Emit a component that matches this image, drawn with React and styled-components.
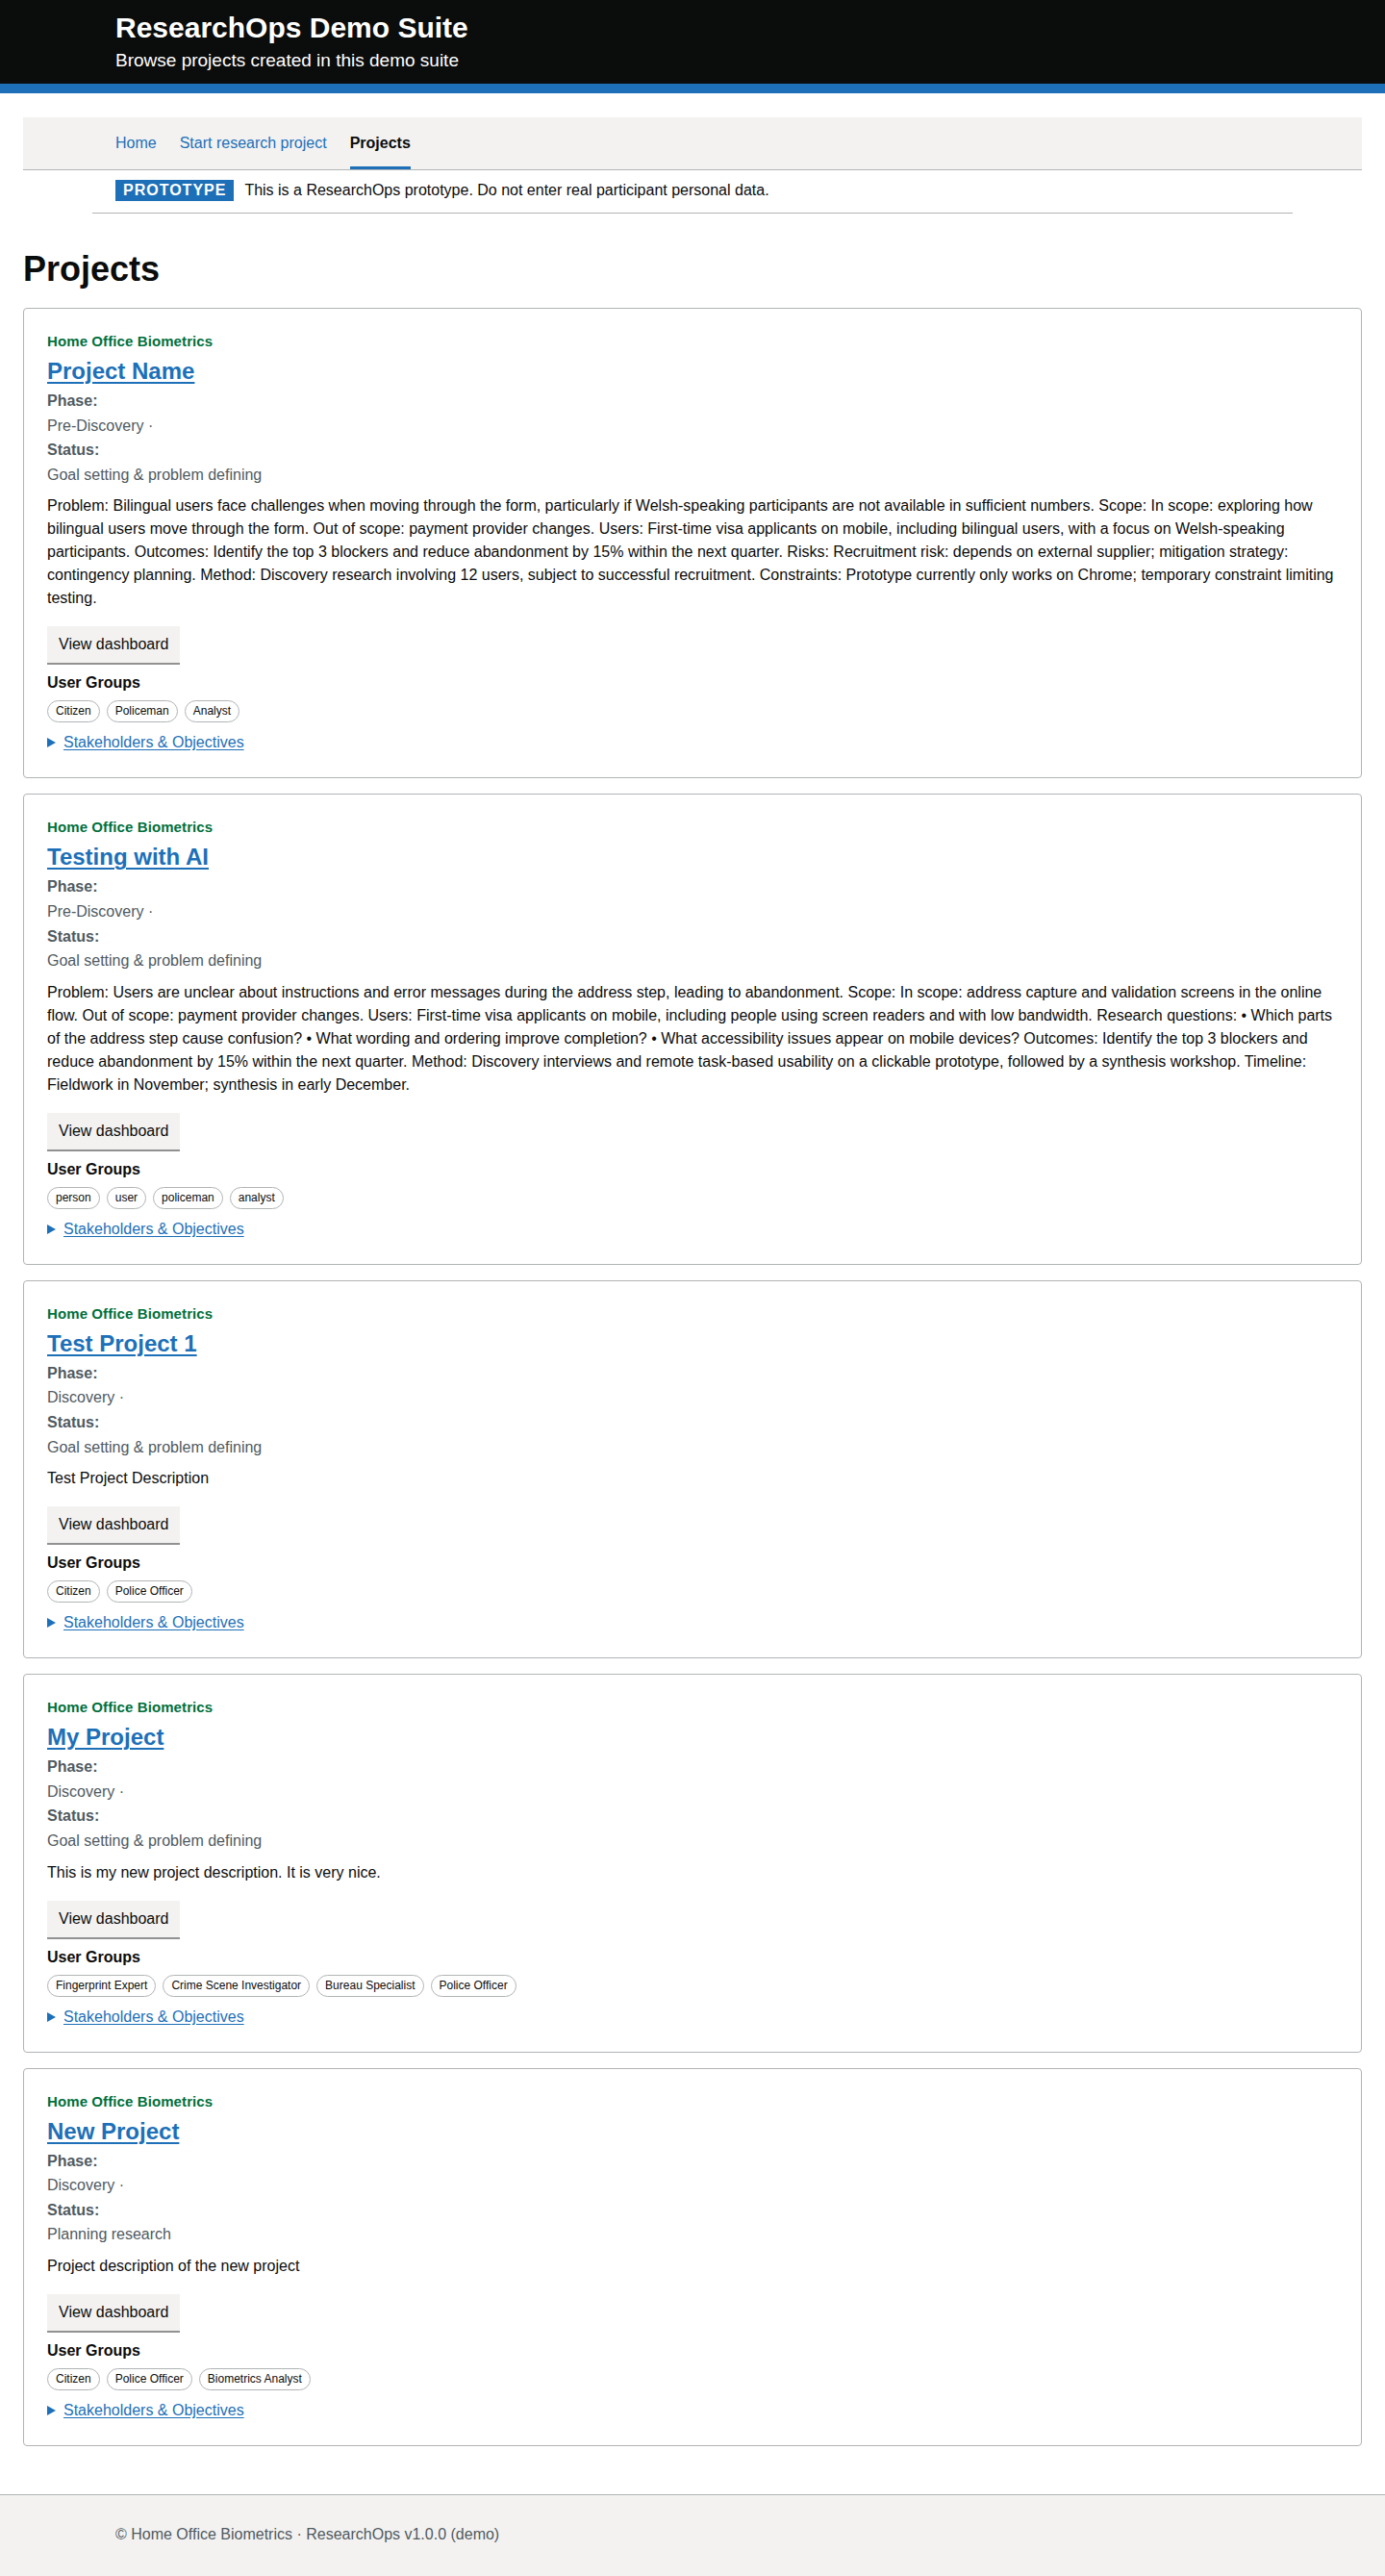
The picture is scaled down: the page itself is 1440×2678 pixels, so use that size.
import React from "react";
import styled, { createGlobalStyle } from "styled-components";

const projects = [
  {
    name: "Project Name",
    phase: "Pre-Discovery",
    status: "Goal setting & problem defining",
    description:
      "Problem: Bilingual users face challenges when moving through the form, particularly if Welsh-speaking participants are not available in sufficient numbers. Scope: In scope: exploring how bilingual users move through the form. Out of scope: payment provider changes. Users: First-time visa applicants on mobile, including bilingual users, with a focus on Welsh-speaking participants. Outcomes: Identify the top 3 blockers and reduce abandonment by 15% within the next quarter. Risks: Recruitment risk: depends on external supplier; mitigation strategy: contingency planning. Method: Discovery research involving 12 users, subject to successful recruitment. Constraints: Prototype currently only works on Chrome; temporary constraint limiting testing.",
    groups: ["Citizen", "Policeman", "Analyst"],
  },
  {
    name: "Testing with AI",
    phase: "Pre-Discovery",
    status: "Goal setting & problem defining",
    description:
      "Problem: Users are unclear about instructions and error messages during the address step, leading to abandonment. Scope: In scope: address capture and validation screens in the online flow. Out of scope: payment provider changes. Users: First-time visa applicants on mobile, including people using screen readers and with low bandwidth. Research questions: • Which parts of the address step cause confusion? • What wording and ordering improve completion? • What accessibility issues appear on mobile devices? Outcomes: Identify the top 3 blockers and reduce abandonment by 15% within the next quarter. Method: Discovery interviews and remote task-based usability on a clickable prototype, followed by a synthesis workshop. Timeline: Fieldwork in November; synthesis in early December.",
    groups: ["person", "user", "policeman", "analyst"],
  },
  {
    name: "Test Project 1",
    phase: "Discovery",
    status: "Goal setting & problem defining",
    description: "Test Project Description",
    groups: ["Citizen", "Police Officer"],
  },
  {
    name: "My Project",
    phase: "Discovery",
    status: "Goal setting & problem defining",
    description: "This is my new project description. It is very nice.",
    groups: ["Fingerprint Expert", "Crime Scene Investigator", "Bureau Specialist", "Police Officer"],
  },
  {
    name: "New Project",
    phase: "Discovery",
    status: "Planning research",
    description: "Project description of the new project",
    groups: ["Citizen", "Police Officer", "Biometrics Analyst"],
  },
];

const GlobalStyle = createGlobalStyle`
  * { box-sizing: border-box; }
  body {
    margin: 0;
    font-family: "Liberation Sans", Arial, sans-serif;
    color: #0b0c0c;
    background: #fff;
    font-size: 16px;
  }
`;

const Header = styled.header`
  background: #0b0c0c;
  border-bottom: 10px solid #1d70b8;
  padding: 11px 120px 12px;
  color: #fff;
`;

const SiteTitle = styled.div`
  font-size: 30px;
  line-height: 36px;
  font-weight: 700;
  margin-bottom: 4px;
`;

const SiteSubtitle = styled.div`
  font-size: 19px;
  line-height: 24px;
`;

const Main = styled.main`
  padding: 25px 24px 34px;
`;

const Nav = styled.nav`
  background: #f3f2f1;
  border-bottom: 1px solid #b1b4b6;
  padding: 0 96px;
  display: flex;
  gap: 24px;
`;

const NavLink = styled.a`
  display: block;
  padding: 15px 0;
  line-height: 24px;
  font-size: 16px;
  text-decoration: none;
  color: ${(p) => (p.$active ? "#0b0c0c" : "#1d70b8")};
  font-weight: ${(p) => (p.$active ? 700 : 400)};
  box-shadow: ${(p) => (p.$active ? "inset 0 -3px 0 #1d70b8" : "none")};
`;

const Banner = styled.div`
  margin: 0 72px;
  padding: 9px 24px 11px;
  border-bottom: 1px solid #b1b4b6;
  display: flex;
  align-items: center;
  line-height: 24px;
`;

const PhaseTag = styled.strong`
  background: #1d70b8;
  color: #fff;
  font-size: 16px;
  line-height: 18px;
  letter-spacing: 1px;
  padding: 2px 8px;
  margin-right: 11px;
`;

const PageTitle = styled.h1`
  font-size: 36px;
  line-height: 40px;
  margin: 38px 0 20px;
`;

const Card = styled.article`
  border: 1px solid #b1b4b6;
  border-radius: 4px;
  padding: 24px;
  margin-bottom: 16px;
`;

const Org = styled.div`
  color: #00703c;
  font-size: 15px;
  line-height: 20px;
  font-weight: 700;
  letter-spacing: 0.1px;
  margin-bottom: 6px;
`;

const ProjectLink = styled.a`
  display: inline-block;
  font-size: 24px;
  line-height: 30px;
  font-weight: 700;
  color: #1d70b8;
  text-decoration: underline;
  text-decoration-thickness: 2px;
  text-underline-offset: 3px;
`;

const Meta = styled.dl`
  margin: 3px 0 8px;
  color: #505a5f;
  line-height: 25.6px;
`;

const MetaLabel = styled.dt`
  font-weight: 700;
`;

const MetaValue = styled.dd`
  margin: 0;
`;

const Description = styled.p`
  margin: 0 0 17px;
  line-height: 24px;
`;

const Button = styled.button`
  display: block;
  font-family: inherit;
  font-size: 16px;
  line-height: 20px;
  padding: 9px 12px;
  border: 0;
  border-radius: 0;
  background: #f3f2f1;
  color: #0b0c0c;
  box-shadow: 0 2px 0 #929191;
  margin-bottom: 11px;
  cursor: pointer;
`;

const GroupsHeading = styled.h3`
  font-size: 16px;
  line-height: 20px;
  margin: 0 0 8px;
`;

const TagList = styled.div`
  display: flex;
  flex-wrap: wrap;
  gap: 7px;
  margin-bottom: 9px;
`;

const Tag = styled.span`
  border: 1px solid #b1b4b6;
  border-radius: 999px;
  padding: 3px 8px;
  font-size: 12px;
  line-height: 15px;
  color: #0b0c0c;
  background: #fff;
`;

const Summary = styled.div`
  display: flex;
  align-items: center;
  line-height: 24px;
  color: #1d70b8;

  &::before {
    content: "";
    border-left: 9px solid #1d70b8;
    border-top: 5px solid transparent;
    border-bottom: 5px solid transparent;
    margin-right: 8px;
  }

  a {
    color: #1d70b8;
    text-decoration: underline;
    text-underline-offset: 2px;
  }
`;

const Footer = styled.footer`
  background: #f3f2f1;
  border-top: 1px solid #b1b4b6;
  padding: 29px 120px 31px;
  color: #505a5f;
  line-height: 24px;
`;

const ProjectCard = ({ project }) => (
  <Card>
    <Org>Home Office Biometrics</Org>
    <ProjectLink href="#">{project.name}</ProjectLink>
    <Meta>
      <MetaLabel>Phase:</MetaLabel>
      <MetaValue>{project.phase} ·</MetaValue>
      <MetaLabel>Status:</MetaLabel>
      <MetaValue>{project.status}</MetaValue>
    </Meta>
    <Description>{project.description}</Description>
    <Button>View dashboard</Button>
    <GroupsHeading>User Groups</GroupsHeading>
    <TagList>
      {project.groups.map((g) => (
        <Tag key={g}>{g}</Tag>
      ))}
    </TagList>
    <Summary>
      <a href="#">Stakeholders &amp; Objectives</a>
    </Summary>
  </Card>
);

export default function App() {
  return (
    <>
      <GlobalStyle />
      <Header>
        <SiteTitle>ResearchOps Demo Suite</SiteTitle>
        <SiteSubtitle>Browse projects created in this demo suite</SiteSubtitle>
      </Header>
      <Main>
        <Nav>
          <NavLink href="#">Home</NavLink>
          <NavLink href="#">Start research project</NavLink>
          <NavLink href="#" $active>Projects</NavLink>
        </Nav>
        <Banner>
          <PhaseTag>PROTOTYPE</PhaseTag>
          This is a ResearchOps prototype. Do not enter real participant personal data.
        </Banner>
        <PageTitle>Projects</PageTitle>
        {projects.map((p) => (
          <ProjectCard key={p.name} project={p} />
        ))}
      </Main>
      <Footer>© Home Office Biometrics · ResearchOps v1.0.0 (demo)</Footer>
    </>
  );
}
